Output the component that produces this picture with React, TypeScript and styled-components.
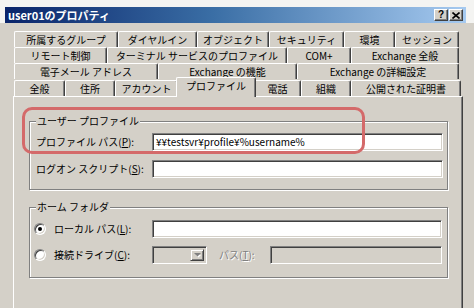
import * as React from 'react';
import styled, { createGlobalStyle } from 'styled-components';

const GlobalStyle = createGlobalStyle`
  html, body {
    margin: 0;
    padding: 0;
    background: #ffffff;
  }
  body {
    font-family: "Noto Sans CJK JP", "Noto Sans", sans-serif;
    font-size: 10px;
    color: #000000;
  }
`;

const Frame = styled.div`
  width: 474px;
  height: 308px;
  overflow: hidden;
  background: #d4d0c8;
`;

const TitleArea = styled.div`
  background: #f4f4f2;
  padding: 7px 8px 0 5px;
`;

const TitleBar = styled.div`
  height: 16px;
  display: flex;
  align-items: center;
  padding: 0 3px 0 3px;
  background: linear-gradient(to right, #0a246a, #3a6ea5 45%, #a6caf0);
  color: #ffffff;
`;

const TitleText = styled.span`
  flex: 1;
  font-size: 11px;
  font-weight: bold;
  line-height: 16px;
`;

const CaptionButtons = styled.div`
  display: flex;
  gap: 1px;
`;

const CaptionButton = styled.div`
  width: 14px;
  height: 12px;
  box-sizing: border-box;
  background: #d4d0c8;
  border: 1px solid;
  border-color: #ffffff #404040 #404040 #ffffff;
  box-shadow: inset -1px -1px 0 #808080;
  color: #000000;
  font-family: "Liberation Sans", sans-serif;
  font-size: 10px;
  font-weight: bold;
  line-height: 10px;
  display: flex;
  align-items: center;
  justify-content: center;
`;

const Body = styled.div`
  padding: 8px 0 0 13px;
`;

const Tabs = styled.div`
  display: flex;
  flex-direction: column;
`;

const TabRow = styled.div<{ $h: number }>`
  display: flex;
  align-items: flex-end;
  height: ${p => p.$h}px;
  padding-left: 1px;
`;

const Tab = styled.div<{ $w: number; $active?: boolean }>`
  width: ${p => (p.$active ? p.$w + 4 : p.$w)}px;
  height: ${p => (p.$active ? 20 : 16)}px;
  margin: ${p => (p.$active ? '0 -2px -1px' : '0')};
  box-sizing: border-box;
  position: relative;
  z-index: ${p => (p.$active ? 1 : 0)};
  background: #d4d0c8;
  border-top: 1px solid #ffffff;
  border-left: 1px solid #ffffff;
  border-right: 1px solid #404040;
  box-shadow: inset -1px 0 0 #808080;
  border-radius: 2px 2px 0 0;
  display: flex;
  align-items: ${p => (p.$active ? 'flex-start' : 'center')};
  padding-top: ${p => (p.$active ? '1px' : '0')};
  justify-content: center;
  white-space: nowrap;
  line-height: 14px;
`;

const Panel = styled.div`
  position: relative;
  width: 450px;
  height: 240px;
  box-sizing: border-box;
  border-top: 1px solid #ffffff;
  border-left: 1px solid #ffffff;
  border-right: 1px solid #404040;
  box-shadow: inset -1px 0 0 #808080;
  padding: 24px 14px 0 15px;
`;

const GroupBox = styled.div<{ $pad: string; $mt?: number }>`
  position: relative;
  margin-top: ${p => p.$mt ?? 0}px;
  border: 1px solid #808080;
  box-shadow: inset 1px 1px 0 #ffffff, 1px 1px 0 #ffffff;
  padding: ${p => p.$pad};
  display: flex;
  flex-direction: column;
`;

const GroupCaption = styled.span`
  position: absolute;
  top: -8px;
  left: 6px;
  padding: 0 1px;
  background: #d4d0c8;
  line-height: 14px;
  white-space: nowrap;
`;

const FieldRow = styled.div<{ $gap?: number }>`
  display: flex;
  align-items: center;
  height: 18px;
  margin-top: ${p => p.$gap ?? 0}px;
`;

const Label = styled.label<{ $w: number; $disabled?: boolean }>`
  width: ${p => p.$w}px;
  flex: none;
  display: flex;
  align-items: center;
  white-space: nowrap;
  line-height: 14px;
  color: ${p => (p.$disabled ? '#808080' : '#000000')};
  text-shadow: ${p => (p.$disabled ? '1px 1px 0 #ffffff' : 'none')};
`;

const TextBox = styled.div<{ $disabled?: boolean }>`
  flex: 1;
  height: 18px;
  box-sizing: border-box;
  border: 1px solid;
  border-color: #808080 #ffffff #ffffff #808080;
  box-shadow: inset 1px 1px 0 #404040, inset -1px -1px 0 #d4d0c8;
  background: ${p => (p.$disabled ? '#d4d0c8' : '#ffffff')};
  padding: 0 3px;
  line-height: 16px;
  white-space: nowrap;
  overflow: hidden;
`;

const Combo = styled.div`
  width: 55px;
  height: 18px;
  flex: none;
  box-sizing: border-box;
  border: 1px solid;
  border-color: #808080 #ffffff #ffffff #808080;
  box-shadow: inset 1px 1px 0 #404040, inset -1px -1px 0 #d4d0c8;
  background: #d4d0c8;
  display: flex;
  justify-content: flex-end;
  padding: 2px 2px 2px 0;
  margin-right: 12px;
`;

const ComboButton = styled.div`
  width: 14px;
  height: 12px;
  box-sizing: border-box;
  border: 1px solid;
  border-color: #d4d0c8 #404040 #404040 #d4d0c8;
  box-shadow: inset 1px 1px 0 #ffffff, inset -1px -1px 0 #808080;
  display: flex;
  align-items: center;
  justify-content: center;
`;

const Radio = styled.span<{ $checked?: boolean }>`
  width: 12px;
  height: 12px;
  flex: none;
  box-sizing: border-box;
  border-radius: 50%;
  border: 1px solid;
  border-color: #808080 #ffffff #ffffff #808080;
  box-shadow: inset 1px 1px 0 #404040, inset -1px -1px 0 #d4d0c8;
  background: #ffffff;
  margin-right: 8px;
  display: flex;
  align-items: center;
  justify-content: center;
  &::after {
    content: '';
    width: 4px;
    height: 4px;
    border-radius: 50%;
    background: ${p => (p.$checked ? '#000000' : 'transparent')};
  }
`;

const Highlight = styled.div`
  position: absolute;
  left: 8px;
  top: 10px;
  width: 343px;
  height: 47px;
  box-sizing: border-box;
  border: 3px solid #d46a6a;
  border-radius: 10px;
  pointer-events: none;
`;

type TabDef = [string, number, boolean?];

const tabRows: TabDef[][] = [
  [['所属するグループ', 104], ['ダイヤルイン', 79], ['オブジェクト', 72], ['セキュリティ', 75], ['環境', 51], ['セッション', 64]],
  [['リモート制御', 93], ['ターミナル サービスのプロファイル', 180], ['COM+', 64], ['Exchange 全般', 108]],
  [['電子メール アドレス', 144], ['Exchange の機能', 139], ['Exchange の詳細設定', 162]],
  [['全般', 51], ['住所', 50], ['アカウント', 63], ['プロファイル', 76, true], ['電話', 47], ['組織', 50], ['公開された証明書', 110]],
];

const App = () => {
  return (
    <Frame>
      <GlobalStyle />
      <TitleArea>
        <TitleBar>
          <TitleText>user01のプロパティ</TitleText>
          <CaptionButtons>
            <CaptionButton>?</CaptionButton>
            <CaptionButton>
              <svg width="8" height="7" viewBox="0 0 8 7">
                <path d="M0.5 0.5 L7.5 6.5 M7.5 0.5 L0.5 6.5" stroke="#000" strokeWidth="1.6" />
              </svg>
            </CaptionButton>
          </CaptionButtons>
        </TitleBar>
      </TitleArea>

      <Body>
        <Tabs>
          {tabRows.map((row, i) => (
            <TabRow key={i} $h={i === 3 ? 17 : 16}>
              {row.map(([label, w, active]) => (
                <Tab key={label} $w={w} $active={active}>
                  {label}
                </Tab>
              ))}
            </TabRow>
          ))}
        </Tabs>

        <Panel>
          <GroupBox $pad="11px 4px 11px 6px">
            <GroupCaption>ユーザー プロファイル</GroupCaption>
            <FieldRow>
              <Label $w={116}>プロファイル パス(<u>P</u>):</Label>
              <TextBox>¥¥testsvr¥profile¥%username%</TextBox>
            </FieldRow>
            <FieldRow $gap={9}>
              <Label $w={116}>ログオン スクリプト(<u>S</u>):</Label>
              <TextBox />
            </FieldRow>
          </GroupBox>

          <GroupBox $pad="12px 5px 13px 4px" $mt={17}>
            <GroupCaption>ホーム フォルダ</GroupCaption>
            <FieldRow>
              <Label $w={118}>
                <Radio $checked />
                ローカル パス(<u>L</u>):
              </Label>
              <TextBox />
            </FieldRow>
            <FieldRow $gap={8}>
              <Label $w={118}>
                <Radio />
                接続ドライブ(<u>C</u>):
              </Label>
              <Combo>
                <ComboButton>
                  <svg width="7" height="5" viewBox="0 0 7 5">
                    <path d="M1 1 L6 1 L3.5 3.5 Z" fill="#ffffff" transform="translate(1 1)" />
                    <path d="M0 0 L7 0 L3.5 3.5 Z" fill="#808080" />
                  </svg>
                </ComboButton>
              </Combo>
              <Label $w={51} $disabled>
                パス(<u>T</u>):
              </Label>
              <TextBox $disabled />
            </FieldRow>
          </GroupBox>

          <Highlight />
        </Panel>
      </Body>
    </Frame>
  );
};

export default App;
